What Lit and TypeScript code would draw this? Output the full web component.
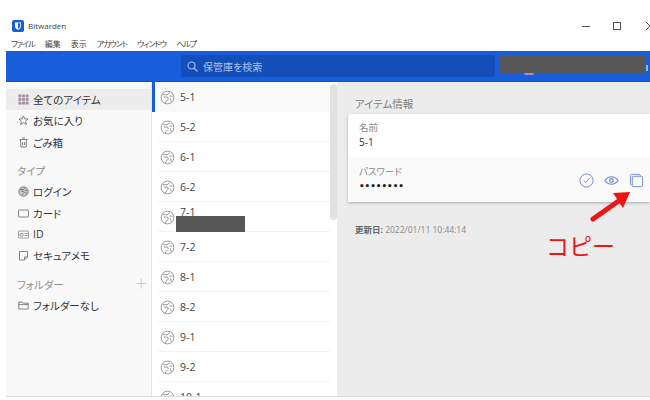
import { LitElement, html, css, svg } from "lit";
import { customElement } from "lit/decorators.js";

const globe = svg`<svg class="globe" viewBox="0 0 16 16" width="15" height="15" fill="none" stroke="#949494" stroke-width="1"><circle cx="8" cy="8" r="6.8"/><path d="M3 5h4.500l3-2M4 7.500h4l1 2-2 2-1.500 2.500M10 6.500h3.500M11 9l1 3"/></svg>`;

const items = ["5-1","5-2","6-1","6-2","7-1","7-2","8-1","8-2","9-1","9-2","10-1"];
const cells = [0, 1, 2].flatMap((y) => [0, 1, 2].map((x) => [x, y]));

@customElement("app-root")
export class AppRoot extends LitElement {
  static styles = css`
    :host { display: block; width: 650px; height: 400px; overflow: hidden; position: relative; background: #fff;
      font-family: "Open Sans", "Noto Sans CJK JP", sans-serif; color: #333; font-size: 11px; font-feature-settings: "palt"; }
    .title { height: 36px; display: flex; align-items: flex-end; padding: 0 0 4px 12px; gap: 4px; box-sizing: border-box; position: relative; }
    .title span { font-size: 8px; color: #444; line-height: 12px; }
    .logo { width: 12px; height: 12px; display: block; }
    .winbtns { position: absolute; right: -4px; top: 22px; display: flex; gap: 23px; align-items: center; }
    .winmin { width: 8px; height: 1px; background: #555; }
    .winmax { width: 6px; height: 6px; border: 1px solid #555; }
    .winclose { width: 8px; height: 8px; margin-left: 2px; }
    .menu { height: 15px; display: flex; gap: 10px; padding-left: 11px; font-size: 8px; line-height: 15px; color: #444; }
    .menu .k { letter-spacing: -1px; }
    .head { height: 31px; margin-left: 6px; background: #175ddc; display: flex; align-items: center; padding-left: 175px; box-sizing: border-box; border-bottom: 1px solid #1252c4; }
    .search { width: 314px; height: 22px; background: #134eb9; border-radius: 2px; display: flex; align-items: center; gap: 5px; padding-left: 6px; box-sizing: border-box; color: #a9c0ec; font-size: 10px; }
    .body { display: flex; height: 314px; margin-left: 6px; border-bottom: 1px solid #ddd; box-sizing: content-box; }
    .side { width: 146px; background: #f9f9f9; border-right: 1px solid #e6e6e6; box-sizing: border-box; padding-top: 7px; }
    .nav { height: 21.3px; display: flex; align-items: center; gap: 4px; padding-left: 12px; font-size: 10.5px; color: #333; white-space: nowrap; }
    .nav.active { background: #ececec; }
    .nav svg { flex: none; }
    .cap { height: 21.3px; display: flex; align-items: center; justify-content: space-between; padding: 0 4px 0 11px; font-size: 10.5px; color: #8f8f8f; }
    .cap.types { margin-top: 7px; }
    .cap.folders { margin-top: 7px; }
    .plus { font-size: 20px; font-weight: 300; color: #c5c5c5; line-height: 1; }
    .list { width: 185px; background: #fff; position: relative; overflow: hidden; flex: none; }
    .row { height: 30px; display: flex; align-items: center; box-sizing: border-box; padding-left: 8px; margin-right: 7px; gap: 5px; position: relative; font-size: 10.5px; color: #444; }
    .row::after { content: ""; position: absolute; left: 6px; right: 0; bottom: 0; height: 1px; background: #f2f2f2; }
    .row.sel { background: #fafafa; box-shadow: inset 3px 0 0 #175ddc; }
    .row.sel::after { display: none; }
    .row.up span { transform: translateY(-5px); }
    .globe { flex: none; }
    .thumb { position: absolute; right: 0; top: 2px; width: 7px; height: 136px; border-radius: 4px; background: #e2e2e2; }
    .detail { flex: 1; background: #ececec; padding: 14px 0 0 11px; box-sizing: border-box; }
    .dtitle { font-size: 10.5px; color: #7d7d7d; line-height: 16px; padding-left: 7px; margin-bottom: 2px; }
    .card { background: #fff; border-radius: 2px 0 0 2px; box-shadow: 0 1px 3px rgba(0,0,0,.28); height: 88px; }
    .f1 { height: 44px; padding: 7px 11px; box-sizing: border-box; }
    .f2 { height: 44px; padding: 7px 11px; box-sizing: border-box; background: #fafafa; position: relative; }
    .lab { font-size: 9.5px; line-height: 13px; color: #8a8a8a; }
    .val { font-size: 10px; line-height: 17px; color: #333; }
    .dots { font-size: 8.8px; line-height: 17px; color: #222; font-family: "DejaVu Sans", sans-serif; font-weight: bold; }
    .acts { position: absolute; left: 231px; top: 15px; display: flex; gap: 10px; align-items: center; }
    .upd { margin-top: 21px; padding-left: 7px; font-size: 8.5px; line-height: 14px; color: #888; }
    .upd b { color: #666; font-weight: 700; }
    .red { position: absolute; background: #575757; }
    .r1 { left: 499px; top: 55px; width: 147px; height: 18px; }
    .r2 { left: 176px; top: 216px; width: 69px; height: 16px; }
    .arc { position: absolute; left: 524px; top: 73px; width: 10px; height: 2px; border-radius: 0 0 5px 5px; background: #b08cc0; }
    .tick { position: absolute; left: 646px; top: 65px; width: 2px; height: 6px; background: #6ec4f0; }
    .arrow { position: absolute; left: 580px; top: 185px; }
    .copy { position: absolute; left: 546px; top: 231px; font-size: 23px; line-height: 28px; color: #f01414; font-family: "Noto Sans CJK JP", sans-serif; font-feature-settings: normal; }
  `;
  render() {
    return html`
      <div class="title">
        <svg class="logo" viewBox="0 0 12 12"><rect width="12" height="12" rx="2" fill="#175ddc"/><path d="M3 2.500h6v4c0 1.600-1.500 2.600-3 3.300-1.500-.7-3-1.700-3-3.300z" fill="#fff"/><path d="M6 3.300h2.200v3.200c0 1-1.200 1.800-2.200 2.300z" fill="#175ddc"/></svg>
        <span>Bitwarden</span>
        <div class="winbtns"><div class="winmin"></div><div class="winmax"></div><svg class="winclose" viewBox="0 0 8 8" stroke="#555"><path d="M0 0l8 8M8 0l-8 8"/></svg></div>
      </div>
      <div class="menu"><span class="k">ファイル</span><span>編集</span><span>表示</span><span class="k">アカウント</span><span class="k">ウィンドウ</span><span class="k">ヘルプ</span></div>
      <div class="head"><div class="search">
        <svg width="11" height="11" viewBox="0 0 11 11" fill="none" stroke="#a9c0ec" stroke-width="1.1"><circle cx="4.500" cy="4.500" r="3.500"/><path d="M7 7l3.500 3.500"/></svg>
        <span>保管庫を検索</span></div></div>
      <div class="body">
        <div class="side">
          <div class="nav active"><svg width="11" height="11" viewBox="0 0 11 11" fill="#a08c9c">${cells.map(([x, y]) => svg`<rect x=${0.5 + x * 3.6} y=${0.5 + y * 3.6} width="2.800" height="2.800"/>`)}</svg>全てのアイテム</div>
          <div class="nav"><svg width="11" height="11" viewBox="0 0 11 11" fill="none" stroke="#666" stroke-width=".8"><path d="M5.500 1l1.400 3h3.100l-2.400 2.200.8 3.300-2.900-1.800-2.900 1.800.8-3.300L1 4h3.100z"/></svg>お気に入り</div>
          <div class="nav"><svg width="11" height="11" viewBox="0 0 11 11" fill="none" stroke="#666" stroke-width=".8"><path d="M1.500 2.500h8M2.500 2.500l.4 7.500h5.200l.4-7.500M4 1h3M4.500 5v3M6.500 5v3"/></svg>ごみ箱</div>
          <div class="cap types">タイプ</div>
          <div class="nav"><svg width="11" height="11" viewBox="0 0 16 16" fill="#ccc" stroke="#777" stroke-width="1.400"><circle cx="8" cy="8" r="6.800"/><path fill="none" d="M3 5h4.500l3-2M4 7.500h4l1 2-2 2-1.500 2.500M10 6.500h3.500M11 9l1 3"/></svg>ログイン</div>
          <div class="nav"><svg width="11" height="11" viewBox="0 0 11 11" fill="none" stroke="#666" stroke-width=".8"><rect x=".5" y="2" width="10" height="7" rx="1"/></svg>カード</div>
          <div class="nav"><svg width="11" height="11" viewBox="0 0 11 11" fill="none" stroke="#888" stroke-width=".8"><rect x=".5" y="2" width="10" height="7" rx="1"/><path d="M2 4.500h3v2.500H2zM6.500 4.500h3M6.500 6.500h3"/></svg>ID</div>
          <div class="nav"><svg width="11" height="11" viewBox="0 0 11 11" fill="none" stroke="#666" stroke-width=".8"><path d="M1.500 1.500h8v5.500l-3 3h-5zM9.500 7h-3v3"/></svg>セキュアメモ</div>
          <div class="cap folders"><span>フォルダー</span><span class="plus">+</span></div>
          <div class="nav"><svg width="11" height="11" viewBox="0 0 11 11" fill="none" stroke="#666" stroke-width=".8"><path d="M.8 9V2h3.400l1 1.200h5V9zM.8 4.600h9.400"/></svg>フォルダーなし</div>
        </div>
        <div class="list">
          ${items.map((t, i) => html`<div class="row ${i === 0 ? "sel" : ""} ${t === "7-1" ? "up" : ""}">${globe}<span>${t}</span></div>`)}
          <div class="thumb"></div>
        </div>
        <div class="detail">
          <div class="dtitle">アイテム情報</div>
          <div class="card">
            <div class="f1"><div class="lab">名前</div><div class="val">5-1</div></div>
            <div class="f2"><div class="lab">パスワード</div><div class="dots">••••••••</div>
              <div class="acts">
                <svg width="15" height="15" viewBox="0 0 16 16" fill="none" stroke="#6d8ade" stroke-width="1"><circle cx="8" cy="8" r="7"/><path d="M5.200 8.300l2 2 3.600-4.600"/></svg>
                <svg width="15" height="15" viewBox="0 0 16 16" fill="none" stroke="#6d8ade" stroke-width="1.300"><path d="M1 8c2-3 4.300-4 7-4s5 1 7 4c-2 3-4.300 4-7 4s-5-1-7-4z"/><circle cx="8" cy="8" r="2"/></svg>
                <svg width="15" height="15" viewBox="0 0 16 16" fill="none" stroke="#6d8ade" stroke-width="1"><path d="M3 12.500H2.500c-.8 0-1-.5-1-1V2.500c0-.6.400-1 1-1H11c.6 0 1 .3 1 .9V3"/><rect x="3.500" y="3.500" width="11" height="11" rx="1"/></svg>
              </div>
            </div>
          </div>
          <div class="upd"><b>更新日:</b> 2022/01/11 10:44:14</div>
        </div>
      </div>
      <div class="arc"></div>
      <div class="tick"></div>
      <div class="red r1"></div>
      <div class="red r2"></div>
      <svg class="arrow" width="60" height="40" viewBox="0 0 60 40" fill="#f01414"><path d="M13 34L40 15" stroke="#f01414" stroke-width="5" stroke-linecap="round"/><path d="M50 7L33 8l10 15z"/></svg>
      <div class="copy">コピー</div>
    `;
  }
}
